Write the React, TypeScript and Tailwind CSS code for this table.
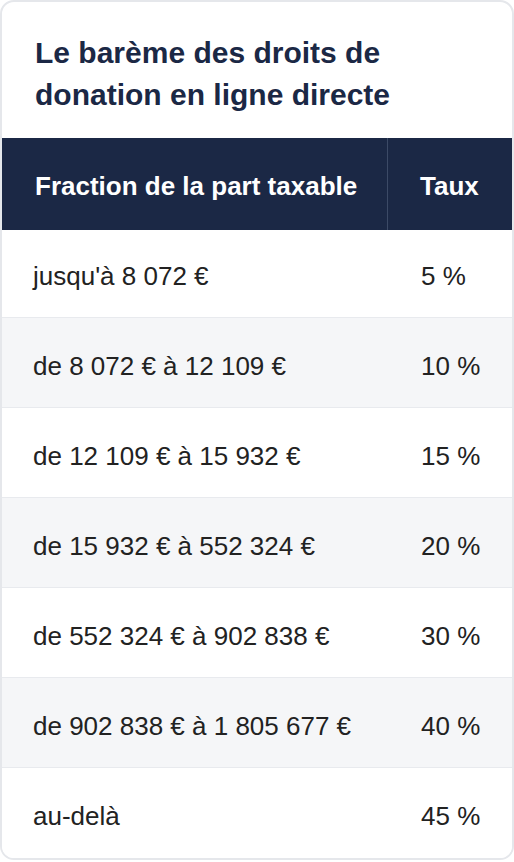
import React from "react";

const rows: [string, string][] = [
  ["jusqu'à 8 072 €", "5 %"],
  ["de 8 072 € à 12 109 €", "10 %"],
  ["de 12 109 € à 15 932 €", "15 %"],
  ["de 15 932 € à 552 324 €", "20 %"],
  ["de 552 324 € à 902 838 €", "30 %"],
  ["de 902 838 € à 1 805 677 €", "40 %"],
  ["au-delà", "45 %"],
];

export default function App() {
  return (
    <div
      className="w-[514px] h-[862px] bg-white"
      style={{ fontFamily: '"Liberation Sans", Arial, sans-serif' }}
    >
      <div className="w-[514px] h-[860px] border-2 border-[#e5e7eb] rounded-[14px] overflow-hidden flex flex-col">
        <div className="h-[136px] pt-[8px] pl-[33px] pr-[20px] flex items-center">
          <h2 className="text-[30px] leading-[42px] font-bold text-[#1b2845]">
            Le barème des droits de donation en ligne directe
          </h2>
        </div>
        <div className="flex h-[92px] pt-[4px] bg-[#1b2845] text-white font-bold text-[26px]">
          <div className="w-[386px] -mt-[4px] pt-[4px] border-r border-[#3c4a66] flex items-center pl-[33px]">
            Fraction de la part taxable
          </div>
          <div className="flex-1 flex items-center pl-[32px]">Taux</div>
        </div>
        {rows.map(([a, b], i) => (
          <div
            key={i}
            className={`flex ${i === 0 ? "h-[88px] pt-[5px]" : "h-[90px] pt-[7px]"} text-[26px] text-[#222222] ${
              i % 2 === 1 ? "bg-[#f5f6f8]" : "bg-white"
            } ${i < rows.length - 1 ? "border-b border-[#e8eaee]" : ""}`}
          >
            <div className="w-[387px] flex items-center pl-[31px]">{a}</div>
            <div className="flex-1 flex items-center pl-[32px]">{b}</div>
          </div>
        ))}
      </div>
    </div>
  );
}
